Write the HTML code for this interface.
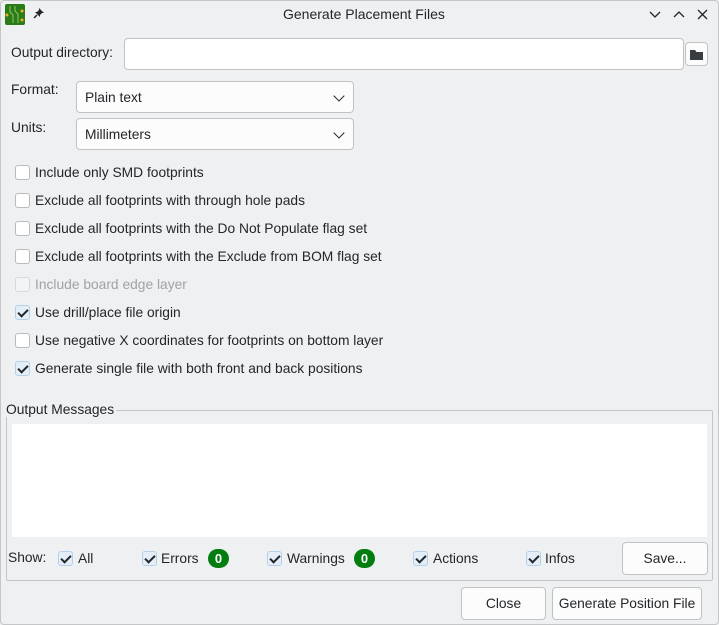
<!DOCTYPE html>
<html><head><meta charset="utf-8"><style>
*{box-sizing:border-box}
body{margin:0;width:719px;height:625px;background:#eff0f1;font-family:"Liberation Sans",sans-serif;font-size:13.8px;color:#232629;position:relative;overflow:hidden}
.a{position:absolute;white-space:nowrap}
.win{position:absolute;left:0;top:0;width:719px;height:625px;border:1px solid #c4c6c8;border-radius:4px}
.inp{position:absolute;background:#fff;border:1px solid #c0c2c4;border-radius:4px}
.btn{position:absolute;background:#fcfcfc;border:1px solid #c0c2c4;border-radius:4px;text-align:center}
.cb{position:absolute;width:15px;height:15px;border:1px solid #b8babc;border-radius:3px;background:#fff}
.cb.on{background:#e3eef9;border-color:#b5cfe8}
.cb.on:after{content:"";position:absolute;left:4px;top:1px;width:4px;height:8px;border:solid #232629;border-width:0 2px 2px 0;transform:rotate(45deg)}
.cb.dis{background:#f3f4f5;border-color:#d6d8da}
.badge{position:absolute;width:21px;height:19px;border-radius:10px;background:#037d0f;color:#fff;font-weight:bold;font-size:13px;text-align:center;line-height:19px}
.arr{position:absolute;right:10px;top:10px;width:8px;height:8px;border:solid #232629;border-width:0 1.5px 1.5px 0;transform:rotate(45deg)}
</style></head><body>
<div class="win"></div>
<svg class="a" style="left:5px;top:4px" width="20" height="21"><rect width="20" height="21" rx="2" fill="#2b7a1a"/><path d="M5 2v6l3 3v8M10 2v5l3 3v9" stroke="#8ecb5a" fill="none"/><circle cx="2" cy="11" r="1.5" fill="#f0b020"/><circle cx="17" cy="7" r="1.5" fill="#f0b020"/><circle cx="17" cy="16" r="1.5" fill="#f0b020"/></svg>
<svg class="a" style="left:33px;top:7px" width="12" height="12"><path d="M6 1l5 5-2 0-2 2 0 2-5-5 2 0 2-2z" fill="#232629"/><path d="M4 8L1 11" stroke="#232629" stroke-width="1.5"/></svg>
<div class="a" style="left:283px;top:6px;font-size:14px">Generate Placement Files</div>
<svg class="a" style="left:648px;top:8px" width="64" height="14" stroke="#232629" stroke-width="1.3" fill="none"><path d="M2 4l5 5 5-5M26 9l5-5 5 5M50 2l9 9M59 2l-9 9"/></svg>
<div class="a" style="left:11px;top:45px">Output directory:</div>
<div class="inp" style="left:124px;top:38px;width:560px;height:32px"></div>
<div class="btn" style="left:685px;top:42px;width:23px;height:24px"><svg width="15" height="13" style="margin-top:5px"><path d="M1 2h5l1.5 2H14v8H1z" fill="#3a3d40"/></svg></div>
<div class="a" style="left:11px;top:82px">Format:</div>
<div class="inp" style="left:76px;top:81px;width:278px;height:32px;background:#fcfcfc"><span class="a" style="left:8px;top:8px">Plain text</span><div class="arr"></div></div>
<div class="a" style="left:11px;top:120px">Units:</div>
<div class="inp" style="left:76px;top:118px;width:278px;height:32px;background:#fcfcfc"><span class="a" style="left:8px;top:8px">Millimeters</span><div class="arr"></div></div>

<div class="cb" style="left:15px;top:165px"></div><div class="a" style="left:35px;top:165px">Include only SMD footprints</div>
<div class="cb" style="left:15px;top:193px"></div><div class="a" style="left:35px;top:193px">Exclude all footprints with through hole pads</div>
<div class="cb" style="left:15px;top:221px"></div><div class="a" style="left:35px;top:221px">Exclude all footprints with the Do Not Populate flag set</div>
<div class="cb" style="left:15px;top:249px"></div><div class="a" style="left:35px;top:249px">Exclude all footprints with the Exclude from BOM flag set</div>
<div class="cb dis" style="left:15px;top:277px"></div><div class="a" style="left:35px;top:277px;color:#a0a2a4">Include board edge layer</div>
<div class="cb on" style="left:15px;top:305px"></div><div class="a" style="left:35px;top:305px">Use drill/place file origin</div>
<div class="cb" style="left:15px;top:333px"></div><div class="a" style="left:35px;top:333px">Use negative X coordinates for footprints on bottom layer</div>
<div class="cb on" style="left:15px;top:361px"></div><div class="a" style="left:35px;top:361px">Generate single file with both front and back positions</div>

<div class="a" style="left:6px;top:410px;width:707px;height:171px;border:1px solid #c4c6c8;border-radius:2px"></div>
<div class="a" style="left:6px;top:402px;background:#eff0f1;padding-right:2px">Output Messages</div>
<div class="a" style="left:12px;top:424px;width:695px;height:113px;background:#fff"></div>
<div class="a" style="left:8px;top:550px">Show:</div>
<div class="cb on" style="left:58px;top:551px"></div><div class="a" style="left:78px;top:551px">All</div>
<div class="cb on" style="left:142px;top:551px"></div><div class="a" style="left:161px;top:551px">Errors</div><div class="badge" style="left:208px;top:549px">0</div>
<div class="cb on" style="left:267px;top:551px"></div><div class="a" style="left:287px;top:551px">Warnings</div><div class="badge" style="left:354px;top:549px">0</div>
<div class="cb on" style="left:413px;top:551px"></div><div class="a" style="left:433px;top:551px">Actions</div>
<div class="cb on" style="left:526px;top:551px"></div><div class="a" style="left:545px;top:551px">Infos</div>
<div class="btn" style="left:622px;top:542px;width:86px;height:33px;line-height:32px">Save...</div>
<div class="btn" style="left:461px;top:587px;width:85px;height:33px;line-height:32px">Close</div>
<div class="btn" style="left:552px;top:587px;width:150px;height:33px;line-height:32px">Generate Position File</div>
</body></html>
